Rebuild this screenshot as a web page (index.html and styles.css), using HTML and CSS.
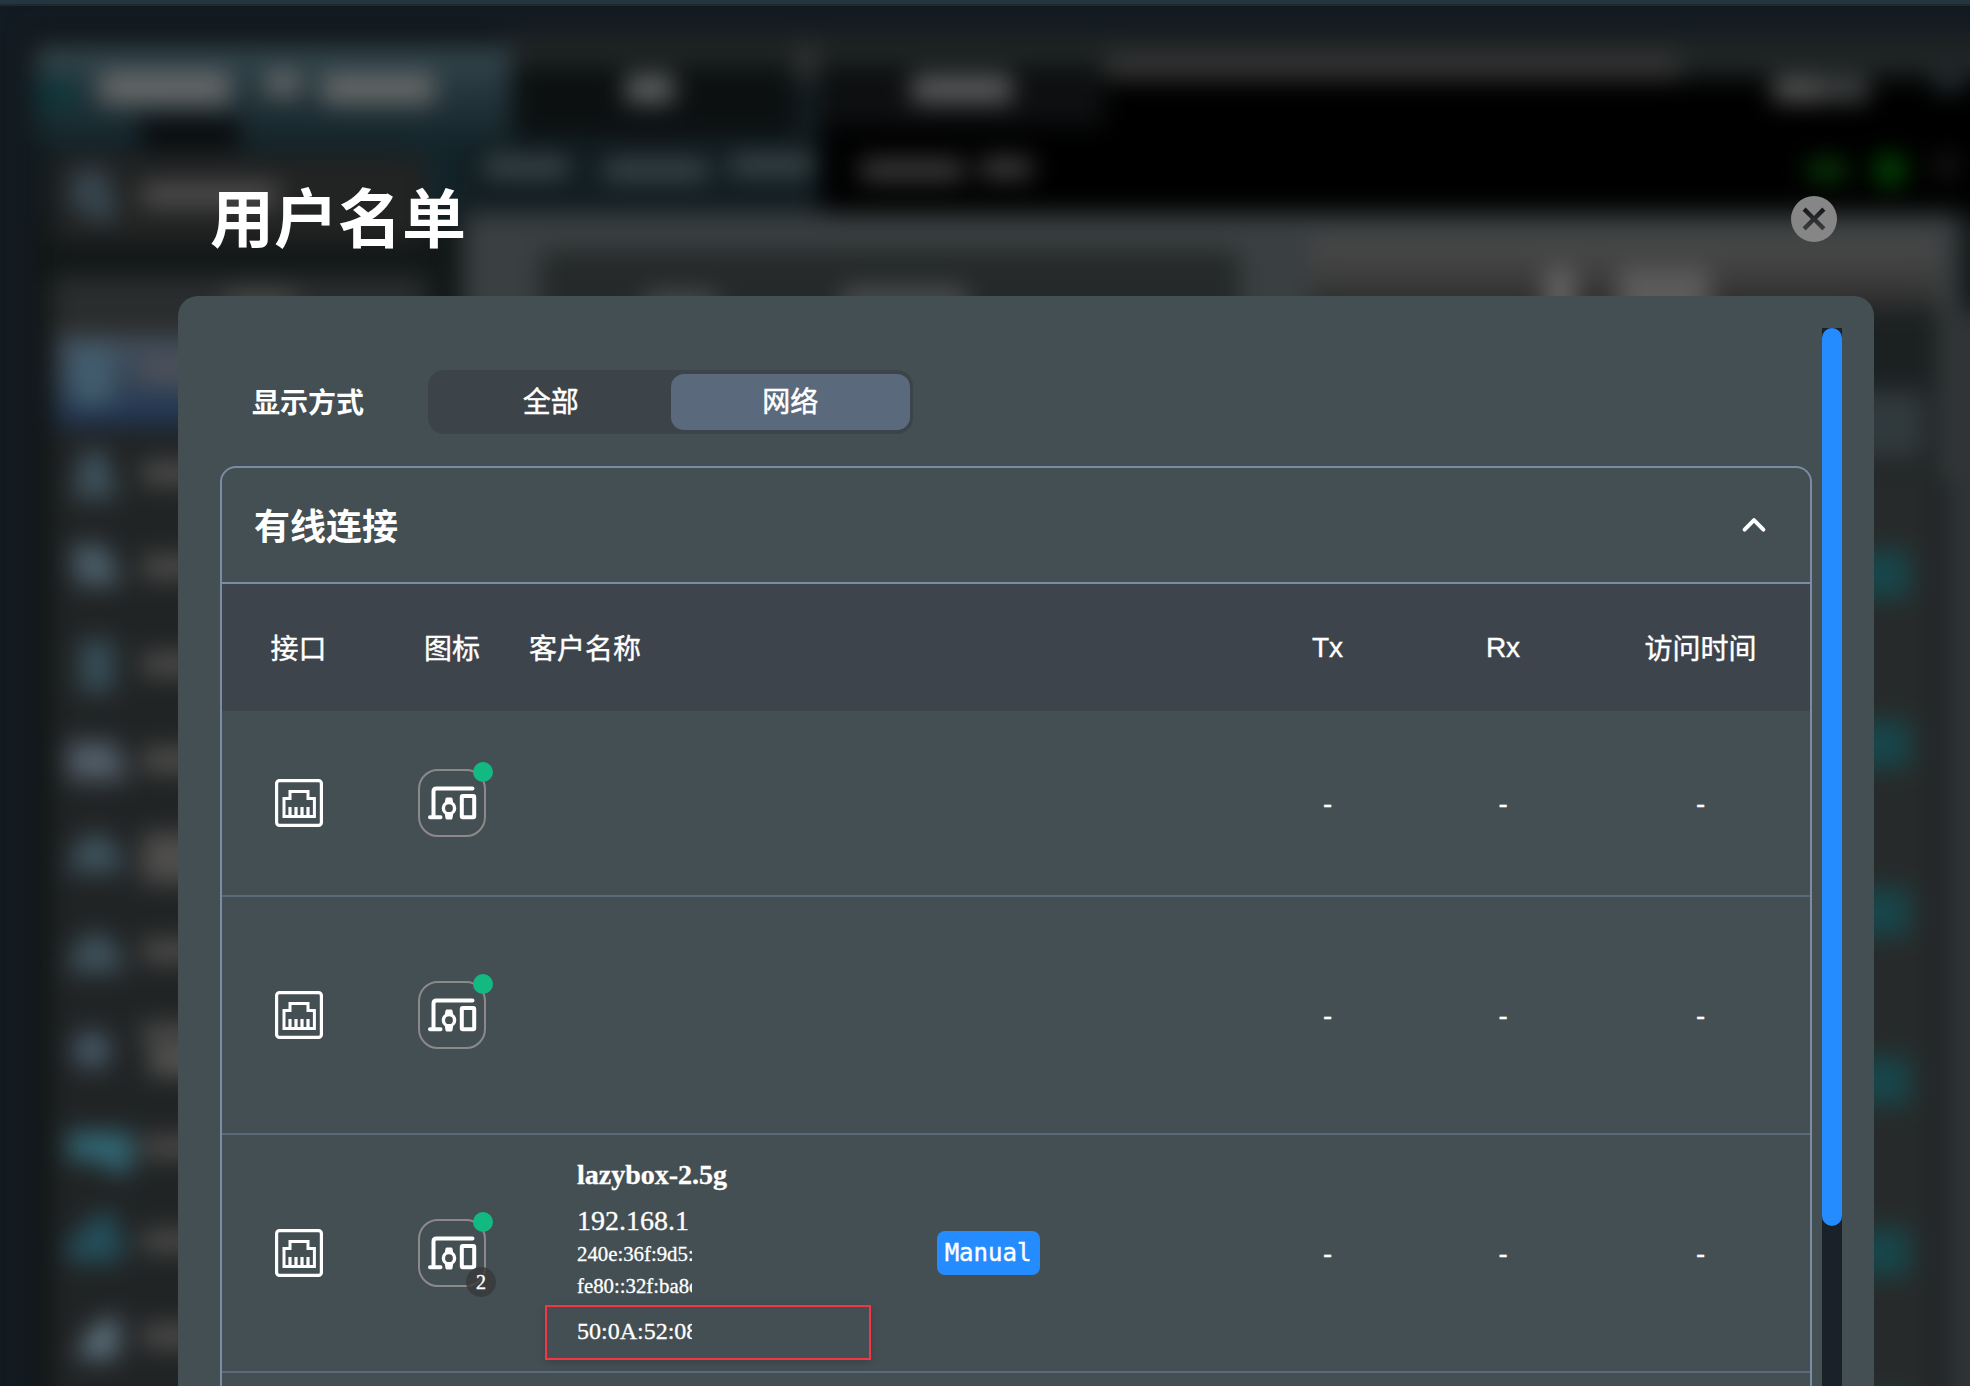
FILE: index.html
```html
<!DOCTYPE html>
<html lang="zh-CN">
<head>
    <meta charset="UTF-8">
    <meta name="viewport" content="width=device-width, initial-scale=1.0">
    <title>用户名单</title>
    <link rel="stylesheet" href="styles.css">
</head>
<body>
    <svg class="symbols" width="0" height="0">
        <symbol id="icon-lan" viewBox="0 0 48 48">
            <rect x="1.6" y="1.6" width="44.8" height="44.8" rx="3" fill="none" stroke="#fff" stroke-width="3.2"/>
            <path d="M9 37.4V19.6h6v-7.2h18v7.2h6.4v17.8z" fill="none" stroke="#fff" stroke-width="3"/>
            <path d="M15 28v9M21 28v9M27 28v9M33 28v9" stroke="#fff" stroke-width="3.2"/>
        </symbol>
        <symbol id="icon-devices" viewBox="0 0 68 68">
            <path d="M54.5 19.6H18.5q-3 0-3 3V48M12 48.2H22.5" fill="none" stroke="#fff" stroke-width="4" stroke-linecap="round"/>
            <path d="M28.2 29h5.6l1 5h-7.6zM27.2 44h7.6l-1 6h-5.6z" fill="#fff" stroke="#fff" stroke-linejoin="round"/>
            <circle cx="31" cy="39.2" r="5.6" fill="none" stroke="#fff" stroke-width="3.4"/>
            <rect x="43.8" y="27" width="12.4" height="21.3" rx="1" fill="none" stroke="#fff" stroke-width="4"/>
        </symbol>
    </svg>

    <!-- router page behind the dialog -->
    <svg class="backdrop" viewBox="0 0 1970 1386" preserveAspectRatio="none">
        <defs>
            <filter id="soft" x="-5%" y="-5%" width="110%" height="110%" color-interpolation-filters="sRGB">
                <feGaussianBlur stdDeviation="12"/>
            </filter>
            <linearGradient id="brand" x1="0" y1="0" x2="0" y2="1">
                <stop offset="0" stop-color="#34474f"/>
                <stop offset=".5" stop-color="#24343a"/>
                <stop offset="1" stop-color="#12242a"/>
            </linearGradient>
            <linearGradient id="active" x1="0" y1="0" x2="0" y2="1">
                <stop offset="0" stop-color="#454f5c"/>
                <stop offset=".5" stop-color="#364657"/>
                <stop offset="1" stop-color="#1b3150"/>
            </linearGradient>
            <linearGradient id="status" x1="0" y1="0" x2="0" y2="1">
                <stop offset="0" stop-color="#4a4a4a"/>
                <stop offset=".5" stop-color="#3e3e3e"/>
                <stop offset="1" stop-color="#262626"/>
            </linearGradient>
        </defs>
        <rect width="1970" height="1386" fill="#131b22"/>
        <g filter="url(#soft)">
            <rect x="30" y="30" width="2000" height="1420" fill="#111617"/>
            <rect x="500" y="34" width="1500" height="40" fill="#1f2425"/>
            <rect x="40" y="80" width="790" height="135" fill="#121d21"/>
            <rect x="400" y="120" width="60" height="95" fill="#12242a"/>
            <rect x="36" y="46" width="474" height="100" fill="url(#brand)"/>
            <rect x="38" y="80" width="40" height="30" fill="#0e363a"/>
            <rect x="515" y="66" width="280" height="70" fill="#0c1011"/>
            <rect x="820" y="80" width="1200" height="134" fill="#000"/>
            <rect x="820" y="66" width="285" height="60" fill="#0d0f10"/>
            <rect x="796" y="44" width="20" height="36" fill="#343434"/>
            <rect x="1105" y="52" width="575" height="28" fill="#333"/>
            <rect x="140" y="118" width="100" height="30" fill="#0a0c0d"/>

            <g fill="#666868">
                <rect x="100" y="72" width="130" height="32"/>
                <rect x="266" y="72" width="34" height="24"/>
                <rect x="322" y="74" width="112" height="30"/>
            </g>
            <rect x="626" y="75" width="48" height="28" fill="#5e6162"/>
            <rect x="912" y="75" width="100" height="28" fill="#585a5b"/>
            <rect x="1773" y="78" width="46" height="24" fill="#545454"/>
            <rect x="1819" y="78" width="50" height="24" fill="#3f4141"/>
            <rect x="1935" y="72" width="28" height="20" fill="#252e32"/>
            <g fill="#3c474a">
                <rect x="484" y="157" width="84" height="20"/>
                <rect x="604" y="160" width="104" height="20"/>
                <rect x="730" y="155" width="84" height="20"/>
            </g>
            <rect x="860" y="159" width="104" height="22" fill="#3c3c3c"/>
            <rect x="980" y="157" width="52" height="22" fill="#3c3c3c"/>
            <rect x="1808" y="160" width="38" height="20" fill="#093c09"/>
            <circle cx="1890" cy="170" r="17" fill="#034304"/>
            <circle cx="1946" cy="166" r="12" fill="#1a1a1a"/>

            <!-- main area -->
            <rect x="463" y="213" width="1497" height="1200" fill="#3a3f41"/>
            <rect x="540" y="250" width="700" height="200" rx="14" fill="#252929"/>
            <rect x="1310" y="236" width="630" height="80" fill="url(#status)"/>
            <rect x="1545" y="268" width="30" height="60" fill="#626262"/>
            <rect x="1618" y="268" width="92" height="60" fill="#5a5b5a"/>
            <rect x="645" y="291" width="72" height="30" fill="#484a4a"/>
            <rect x="842" y="286" width="124" height="30" fill="#4a4c4c"/>
            <rect x="1850" y="312" width="90" height="1200" fill="#1b2021"/>
            <rect x="1850" y="470" width="84" height="1000" fill="#272a2a"/>
            <rect x="1934" y="480" width="14" height="1000" fill="#1c2125"/>
            <rect x="1948" y="312" width="80" height="1200" fill="#303435"/>
            <rect x="1850" y="390" width="76" height="70" fill="#30393b"/>
            <g fill="#17464a">
                <rect x="1850" y="550" width="60" height="48"/>
                <rect x="1850" y="720" width="60" height="48"/>
                <rect x="1850" y="888" width="60" height="48"/>
                <rect x="1850" y="1057" width="60" height="48"/>
                <rect x="1850" y="1228" width="60" height="48"/>
                <rect x="1850" y="1396" width="60" height="48"/>
            </g>

            <!-- side menu -->
            <rect x="52" y="155" width="375" height="88" fill="#222323"/>
            <rect x="52" y="276" width="375" height="1200" fill="#212425"/>
            <rect x="52" y="276" width="375" height="60" fill="#2a2d2d"/>
            <rect x="56" y="336" width="370" height="90" fill="url(#active)"/>
            <rect x="72" y="345" width="40" height="60" fill="#425d6e"/>
            <rect x="142" y="358" width="60" height="26" fill="#4e5159"/>
            <path d="M76 168h28l16 46-20 10-32-20z" fill="#37464e"/>
            <rect x="142" y="183" width="136" height="24" fill="#4f4e4e"/>
            <rect x="225" y="290" width="70" height="24" fill="#484848"/>
            <g fill="#3f535d">
                <path d="M84 450h20l14 48H72z"/>
                <path d="M72 545h34l16 40H76z" fill="#4b5e69"/>
                <rect x="80" y="640" width="34" height="52" fill="#374e57"/>
                <path d="M68 742h48l12 38H68z" fill="#525e68"/>
                <path d="M68 872q6-38 28-38t28 38z"/>
                <path d="M68 972q6-38 28-38t28 38z"/>
                <circle cx="92" cy="1050" r="19" fill="#475967"/>
                <path d="M68 1132h64v40h-20l-14-12H68z" fill="#326875"/>
                <path d="M100 1212h16v20l12 16-12 14H68v-20z" fill="#244f5b"/>
                <path d="M76 1356l18-30 24-12v44H76z" fill="#5d727e"/>
            </g>
            <g fill="#4f4e4c">
                <rect x="142" y="462" width="60" height="22"/>
                <rect x="142" y="556" width="60" height="22"/>
                <rect x="142" y="653" width="60" height="22"/>
                <rect x="142" y="748" width="60" height="24"/>
                <rect x="142" y="833" width="60" height="50"/>
                <rect x="142" y="940" width="60" height="22"/>
                <rect x="142" y="1024" width="60" height="20"/>
                <rect x="150" y="1050" width="60" height="24" fill="#5b5b58"/>
                <rect x="142" y="1137" width="60" height="20"/>
                <rect x="142" y="1231" width="60" height="20"/>
                <rect x="142" y="1325" width="60" height="22"/>
            </g>
        </g>
    </svg>

    <div class="topbar"></div>

    <div class="dialog">
        <div class="dialog-header">
            <h1>用户名单</h1>
            <svg class="close" viewBox="0 0 46 46">
                <path fill="#868686" fill-rule="evenodd" d="M23 0a23 23 0 1 0 0 46a23 23 0 1 0 0-46zM14.7 11.6L23 19.9l8.3-8.3 3.1 3.1L26.1 23l8.3 8.3-3.1 3.1L23 26.1l-8.3 8.3-3.1-3.1L19.9 23l-8.3-8.3z"/>
            </svg>
        </div>

        <div class="panel">
            <div class="content">
                <div class="mode">
                    <span class="mode-label">显示方式</span>
                    <div class="switch">
                        <div class="switch-item">全部</div>
                        <div class="switch-item selected">网络</div>
                    </div>
                </div>

                <div class="card">
                    <div class="card-title">
                        <h2>有线连接</h2>
                        <svg class="chevron" viewBox="0 0 28 20">
                            <path d="M4.6 14.6L14 5.2l9.4 9.4" fill="none" stroke="#fff" stroke-width="4" stroke-linecap="round" stroke-linejoin="round"/>
                        </svg>
                    </div>

                    <div class="row head">
                        <div>接口</div>
                        <div>图标</div>
                        <div class="name-head">客户名称</div>
                        <div></div>
                        <div></div>
                        <div class="rate">Tx</div>
                        <div class="rate">Rx</div>
                        <div>访问时间</div>
                    </div>

                    <div class="row first">
                        <div><svg class="lan"><use href="#icon-lan"/></svg></div>
                        <div>
                            <div class="device">
                                <svg class="device-icon"><use href="#icon-devices"/></svg>
                                <span class="online"></span>
                            </div>
                        </div>
                        <div></div>
                        <div></div>
                        <div></div>
                        <div class="value">-</div>
                        <div class="value">-</div>
                        <div class="value">-</div>
                    </div>

                    <div class="row">
                        <div><svg class="lan"><use href="#icon-lan"/></svg></div>
                        <div>
                            <div class="device">
                                <svg class="device-icon"><use href="#icon-devices"/></svg>
                                <span class="online"></span>
                            </div>
                        </div>
                        <div></div>
                        <div></div>
                        <div></div>
                        <div class="value">-</div>
                        <div class="value">-</div>
                        <div class="value">-</div>
                    </div>

                    <div class="row">
                        <div><svg class="lan"><use href="#icon-lan"/></svg></div>
                        <div>
                            <div class="device">
                                <svg class="device-icon"><use href="#icon-devices"/></svg>
                                <span class="online"></span>
                                <span class="count">2</span>
                            </div>
                        </div>
                        <div class="client">
                            <div class="client-name">lazybox-2.5g</div>
                            <div class="ip">192.168.1</div>
                            <div class="ipv6">240e:36f:9d5:</div>
                            <div class="ipv6">fe80::32f:ba8c</div>
                            <div class="mac-box"><div class="mac">50:0A:52:08</div></div>
                        </div>
                        <div><span class="tag">Manual</span></div>
                        <div></div>
                        <div class="value">-</div>
                        <div class="value">-</div>
                        <div class="value">-</div>
                    </div>
                </div>
            </div>
            <div class="scrollbar"><div class="thumb"></div></div>
        </div>
    </div>
</body>
</html>
```
FILE: styles.css
```css
* {
    box-sizing: border-box;
}
body {
    margin: 0;
    width: 1970px;
    height: 1386px;
    overflow: hidden;
    background-color: #131b22;
    color: #fff;
    font-family: Roboto, "Noto Sans CJK SC", sans-serif;
    font-size: 28px;
}
h1, h2 {
    margin: 0;
}
.symbols {
    display: block;
}
.backdrop {
    position: absolute;
    top: 0;
    left: 0;
    width: 1970px;
    height: 1386px;
    z-index: -1;
}
.topbar {
    height: 6px;
    background-color: #213640;
    border-bottom: 2px solid #20282c;
}

.dialog {
    width: 1696px;
    margin-left: 178px;
    padding-top: 136px;
}
.dialog-header {
    display: flex;
    justify-content: space-between;
    align-items: center;
    height: 154px;
    padding: 0 37px 0 32px;
}
.dialog-header h1 {
    padding-top: 4px;
    font-size: 64px;
    font-weight: 700;
    line-height: 92px;
}
.close {
    width: 46px;
    height: 46px;
}

.panel {
    display: flex;
    height: 1090px;
    padding: 32px 32px 0 42px;
    background-color: #444f53;
    border-radius: 20px 20px 0 0;
}
.content {
    width: 1592px;
    padding-top: 42px;
}
.mode {
    display: flex;
    align-items: center;
    padding-left: 32px;
}
.mode-label {
    width: 176px;
    padding-bottom: 2px;
    font-weight: 700;
}
.switch {
    display: flex;
    width: 485px;
    height: 64px;
    padding: 4px 3px;
    background-color: #3c4349;
    border-radius: 16px;
}
.switch-item {
    flex: 1;
    line-height: 58px;
    text-align: center;
    -webkit-text-stroke: 0.5px #fff;
}
.switch-item.selected {
    background-color: #5b697c;
    border-radius: 13px;
}

.card {
    height: 920px;
    margin-top: 32px;
    border: 2px solid #7b8ca5;
    border-bottom: none;
    border-radius: 16px 16px 0 0;
}
.card-title {
    display: flex;
    justify-content: space-between;
    align-items: center;
    height: 116px;
    padding: 0 42px 0 32px;
    border-bottom: 2px solid #7b8ca5;
}
.card-title h2 {
    padding-bottom: 3px;
    font-size: 36px;
    font-weight: 700;
}
.chevron {
    width: 28px;
    height: 20px;
}

.row {
    display: grid;
    grid-template-columns: 153px 154px 345px 228px 138px 175px 176px 219px;
    height: 238px;
    border-bottom: 2px solid #5b697c;
}
.row > div {
    display: flex;
    align-items: center;
    justify-content: center;
}
.row.head {
    height: 127px;
    padding-bottom: 2px;
    background-color: #3d444b;
    border-bottom: none;
    -webkit-text-stroke: 0.4px #fff;
}
.row.head .rate {
    padding-top: 3px;
    font-family: "Liberation Sans", sans-serif;
}
.row.first {
    height: 186px;
}
.row .name-head {
    justify-content: flex-start;
}
.row .value {
    padding-top: 2px;
    -webkit-text-stroke: 0.4px #fff;
}
.lan {
    width: 48px;
    height: 48px;
}
.device {
    position: relative;
    width: 68px;
    height: 68px;
    border: 2px solid #8d898b;
    border-radius: 20px;
}
.device-icon {
    display: block;
    width: 68px;
    height: 68px;
    margin: -2px;
}
.online {
    position: absolute;
    top: -9px;
    right: -9px;
    width: 20px;
    height: 20px;
    background-color: #12b981;
    border-radius: 50%;
}
.count {
    position: absolute;
    right: -12px;
    bottom: -12px;
    width: 30px;
    height: 30px;
    line-height: 30px;
    font-family: "Liberation Serif", serif;
    font-size: 20px;
    text-align: center;
    background-color: rgba(56, 56, 56, 0.8);
    border-radius: 50%;
    -webkit-text-stroke: 0.4px #fff;
}

.row .client {
    display: block;
    padding: 17px 0 0 48px;
    font-family: "Liberation Serif", serif;
    -webkit-text-stroke: 0.3px #fff;
}
.client-name {
    font-weight: bold;
    line-height: 46px;
}
.ip {
    width: 115px;
    margin-top: 6px;
    line-height: 34px;
    overflow: hidden;
}
.ipv6 {
    width: 115px;
    font-size: 20.8px;
    line-height: 32px;
    white-space: nowrap;
    overflow: hidden;
}
.mac-box {
    width: 326px;
    height: 55px;
    margin: 3px 0 0 -32px;
    padding-left: 30px;
    border: 2px solid #f23645;
    box-shadow: 0 2px 8px rgba(0, 0, 0, 0.15);
}
.mac {
    width: 115px;
    font-size: 24px;
    line-height: 48px;
    overflow: hidden;
}
.tag {
    width: 103px;
    height: 44px;
    line-height: 45px;
    font-family: "DejaVu Sans Mono", monospace;
    font-size: 24px;
    text-align: center;
    background-color: #248cff;
    border-radius: 8px;
    -webkit-text-stroke: 0.4px #fff;
}

.scrollbar {
    width: 20px;
    margin-left: 10px;
    background-color: #1a2128;
}
.thumb {
    height: 898px;
    background-color: #248cff;
    border-radius: 10px;
}
```
